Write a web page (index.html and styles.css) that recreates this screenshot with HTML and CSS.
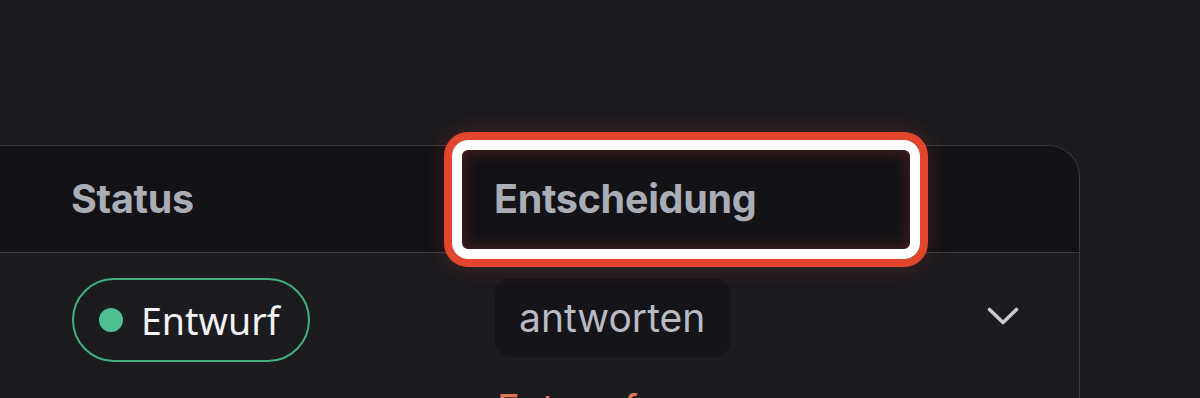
FILE: index.html
```html
<!DOCTYPE html>
<html lang="de">
<head>
  <meta charset="UTF-8">
  <meta name="viewport" content="width=device-width, initial-scale=1.0">
  <title>Entscheidungen</title>
  <link rel="stylesheet" href="styles.css">
</head>
<body>
  <div class="page">
    <div class="table">
      <div class="table-head">
        <div class="th">Status</div>
        <div class="th th-focus">
          Entscheidung
          <span class="focus-ring"></span> <!-- Markierung der Spalte -->
        </div>
      </div>

      <div class="table-row">
        <div class="td">
          <span class="status-pill"><span class="dot"></span>Entwurf</span>
        </div>
        <div class="td td-decision">
          <span class="chip">antworten</span>
          <div class="hint">Entwurf</div>
        </div>
        <div class="td td-toggle">
          <svg class="chevron" width="32" height="19" viewBox="0 0 32 19">
            <polyline points="2.5,2.5 16,15.5 29.5,2.5" fill="none" stroke="#c9c9cf" stroke-width="3.6" stroke-linecap="round" stroke-linejoin="round"/>
          </svg>
        </div>
      </div>
    </div>
  </div>
</body>
</html>
```

FILE: styles.css
```css
body {
  margin: 0;
  height: 398px;
  overflow: hidden;
  background-color: #1c1b20;
  font-family: Inter, "Liberation Sans", sans-serif;
}

.page {
  padding-top: 145px;
}

.table {
  width: 1080px;
  height: 260px;
  box-sizing: border-box;
  border: 1.5px solid #3a393f;
  border-left: none;
  border-bottom: none;
  border-top-right-radius: 32px;
}

.table-head {
  display: grid;
  grid-template-columns: 423px 1fr;
  height: 106px;
  background-color: #131216;
  border-bottom: 1.5px solid #39383e;
  border-top-right-radius: 31px;
}

.th {
  display: flex;
  align-items: center;
  padding-left: 71px;
  font-size: 39.5px;
  font-weight: 700;
  color: #a9adb6;
  letter-spacing: -0.3px;
}

.th-focus {
  position: relative;
}

.focus-ring {
  position: absolute;
  left: 29px;
  top: -6px;
  width: 468px;
  height: 119px;
  box-sizing: border-box;
  border: 10px solid #ffffff;
  border-radius: 16px;
  box-shadow: 0 0 0 8px #e2462c, 0 0 22px 8px rgba(226, 70, 44, 0.22), inset 0 0 16px rgba(200, 70, 40, 0.35);
  pointer-events: none;
}

.table-row {
  display: grid;
  grid-template-columns: 423px 1fr auto;
  padding-top: 25px;
}

.td {
  padding-left: 72px;
}

.status-pill {
  display: inline-flex;
  align-items: center;
  height: 84px;
  box-sizing: border-box;
  padding: 0 28px 0 25px;
  border: 2px solid #3fb07e;
  border-radius: 42px;
  font-family: "Noto Sans", "Open Sans", sans-serif;
  font-size: 37.5px;
  color: #f3f3f5;
}

.dot {
  width: 24px;
  height: 24px;
  margin-right: 18px;
  border-radius: 50%;
  background-color: #4cc08f;
}

.chip {
  display: inline-flex;
  align-items: center;
  height: 79px;
  box-sizing: border-box;
  padding: 0 25px 0 24px;
  border-radius: 16px;
  background-color: #151418;
  font-size: 39px;
  color: #b7bbc5;
}

.hint {
  margin-top: 28px;
  padding-left: 2px;
  font-size: 38px;
  color: #e07454;
}

.td-toggle {
  padding: 29px 60px 0 0;
}

.chevron {
  display: block;
}
```
